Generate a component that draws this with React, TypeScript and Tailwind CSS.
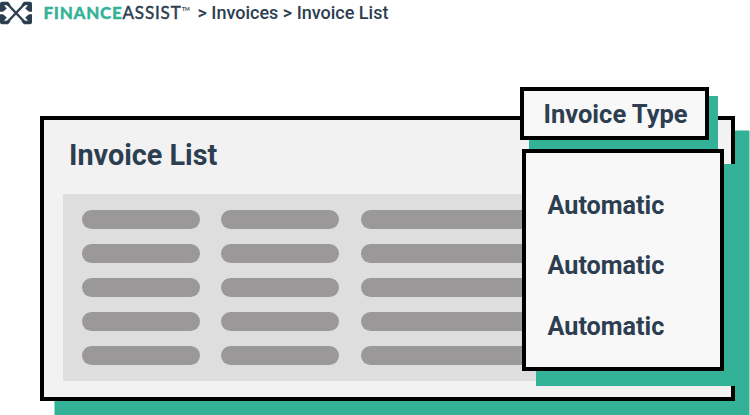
const rows = [0, 1, 2, 3, 4];
const options = ["Automatic", "Automatic", "Automatic"];

function Logo() {
  return (
    <svg className="h-[24px] w-[32px] shrink-0" viewBox="0 0 32 24" fill="none">
      <path
        d="M24.500 21L7.500 3M24.500 3L7.500 21"
        stroke="#2c3e50"
        strokeWidth="2.500"
      />
      <path
        d="M2 .7H8L10.500 3.500L8.500 5.500L7 4.200H4L6.800 7.500L3 10.700H0V2.700Q0 .7 2 .7ZM2 23.300H8L10.500 20.500L8.500 18.500L7 19.800H4L6.800 16.500L3 13.300H0V21.300Q0 23.300 2 23.300ZM30 .7H24L21.500 3.500L23.500 5.500L25 4.200H28L25.200 7.500L29 10.700H32V2.700Q32 .7 30 .7ZM30 23.300H24L21.500 20.500L23.500 18.500L25 19.800H28L25.200 16.500L29 13.300H32V21.300Q32 23.300 30 23.300Z"
        fill="#2c3e50"
      />
    </svg>
  );
}

function Header() {
  return (
    <header className="flex h-[25px] items-center text-[#2c3e50]">
      <Logo />
      <div className="ml-[11.500px] flex w-[154px] items-center whitespace-nowrap font-['Lato',sans-serif] text-[17px] leading-6">
        <span className="w-[79px] font-black tracking-[0.700px] text-[#33b297] [-webkit-text-stroke:0.3px_#33b297]">FINANCE</span>
        <span className="w-[59.500px] font-normal tracking-[0.850px] [-webkit-text-stroke:0.5px_#2c3e50]">ASSIST</span>
        <span className="-mt-[7px] text-[5px] font-bold leading-none">TM</span>
      </div>
      <nav className="whitespace-nowrap text-[18px] font-medium leading-6">&gt; Invoices &gt; Invoice List</nav>
    </header>
  );
}

function Table() {
  return (
    <div className="ml-[19px] mt-[25px] flex h-[187px] flex-col gap-[15px] overflow-hidden bg-[#dedede] pl-[19px] pt-[16px]">
      {rows.map((row) => (
        <div key={row} className="flex h-[19px] shrink-0 gap-[21.300px]">
          <div className="w-[118px] shrink-0 rounded-full bg-[#9a9898]" />
          <div className="w-[118px] shrink-0 rounded-full bg-[#9a9898]" />
          <div className="w-[200px] shrink-0 rounded-full bg-[#9a9898]" />
        </div>
      ))}
    </div>
  );
}

export default function App() {
  return (
    <div className="relative h-[415px] w-[750px] overflow-hidden bg-white font-['Roboto',sans-serif] text-[#2c3e50]">
      <Header />
      <main className="ml-[40px] mt-[91px] h-[285px] w-[695px] border-4 border-black bg-[#f2f2f2] pr-[19px] pt-[21px] shadow-[14.500px_14.500px_0_#33b297]">
        <h1 className="ml-[25px] text-[28.800px] font-bold leading-[28px]">Invoice List</h1>
        <Table />
      </main>
      <div className="absolute left-[520px] top-[87px] flex h-[53px] w-[189px] items-center whitespace-nowrap border-4 border-black bg-[#f8f8f8] pl-[19.500px] pt-[2px] text-[25.500px] font-bold shadow-[9px_9px_0_#33b297]">
        Invoice Type
      </div>
      <div className="absolute left-[522px] top-[149px] h-[222px] w-[202px] border-4 border-black bg-[#f8f8f8] pl-[21.500px] pt-[38px] shadow-[14px_15px_0_#33b297]">
        <ul className="flex flex-col gap-[30.300px] text-[25.200px] font-bold leading-[30px]">
          {options.map((option, i) => (
            <li key={i}>{option}</li>
          ))}
        </ul>
      </div>
    </div>
  );
}
